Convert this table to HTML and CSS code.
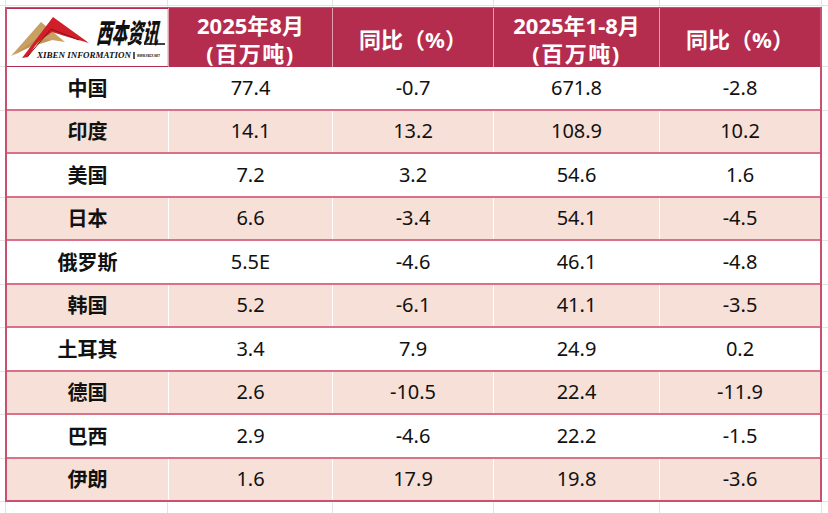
FILE: index.html
```html
<!DOCTYPE html>
<html lang="zh-CN">
<head>
<meta charset="utf-8">
<title>2025年8月 粗钢产量</title>
<link rel="stylesheet" href="styles.css">
</head>
<body>
<div class="sheet">
  <div class="table">
    <div class="row head">
      <div class="cell logo-cell">
        <div class="logo">
          <svg viewBox="0 0 160 57" width="160" height="57" aria-label="西本资讯 XIBEN INFORMATION">
            <polygon points="4,47 34,13 58,33 45,31 23,38" fill="#c9a064"/>
            <polygon points="7,46 30,29 45,31 23,38" fill="#b48a4e" opacity="0.55"/>
            <polygon points="15,49 46,8 82,34 61,28 45,23 30,34 21,48" fill="#d01f2a"/>
            <polyline points="21,47 44,20 72,31" fill="none" stroke="#8e1018" stroke-width="1"/>
            <text class="logo-cn" x="0" y="0" transform="translate(89 34) skewX(-12)" textLength="62" lengthAdjust="spacingAndGlyphs">西本资讯</text>
            <path d="M137 35 L158 35" stroke="#111" stroke-width="1.6"/>
            <text class="logo-en" x="30" y="49" textLength="94" lengthAdjust="spacingAndGlyphs">XIBEN INFORMATION</text>
            <path d="M127 43 L127 50" stroke="#111" stroke-width="1.4"/>
            <text class="logo-url" x="130" y="48" textLength="23" lengthAdjust="spacingAndGlyphs">WWW.XBZX.NET</text>
          </svg>
        </div>
      </div>
      <div class="cell hcell"><span>2025年8月</span><span class="unit">(百万吨)</span></div>
      <div class="cell hcell"><span>同比（%）</span></div>
      <div class="cell hcell"><span>2025年1-8月</span><span class="unit">(百万吨)</span></div>
      <div class="cell hcell"><span>同比（%）</span></div>
    </div>
    <div class="row"><div class="cell name">中国</div><div class="cell">77.4</div><div class="cell">-0.7</div><div class="cell">671.8</div><div class="cell">-2.8</div></div>
    <div class="row alt"><div class="cell name">印度</div><div class="cell">14.1</div><div class="cell">13.2</div><div class="cell">108.9</div><div class="cell">10.2</div></div>
    <div class="row"><div class="cell name">美国</div><div class="cell">7.2</div><div class="cell">3.2</div><div class="cell">54.6</div><div class="cell">1.6</div></div>
    <div class="row alt"><div class="cell name">日本</div><div class="cell">6.6</div><div class="cell">-3.4</div><div class="cell">54.1</div><div class="cell">-4.5</div></div>
    <div class="row"><div class="cell name">俄罗斯</div><div class="cell">5.5E</div><div class="cell">-4.6</div><div class="cell">46.1</div><div class="cell">-4.8</div></div>
    <div class="row alt"><div class="cell name">韩国</div><div class="cell">5.2</div><div class="cell">-6.1</div><div class="cell">41.1</div><div class="cell">-3.5</div></div>
    <div class="row"><div class="cell name">土耳其</div><div class="cell">3.4</div><div class="cell">7.9</div><div class="cell">24.9</div><div class="cell">0.2</div></div>
    <div class="row alt"><div class="cell name">德国</div><div class="cell">2.6</div><div class="cell">-10.5</div><div class="cell">22.4</div><div class="cell">-11.9</div></div>
    <div class="row"><div class="cell name">巴西</div><div class="cell">2.9</div><div class="cell">-4.6</div><div class="cell">22.2</div><div class="cell">-1.5</div></div>
    <div class="row alt last"><div class="cell name">伊朗</div><div class="cell">1.6</div><div class="cell">17.9</div><div class="cell">19.8</div><div class="cell">-3.6</div></div>
  </div>
</div>
</body>
</html>
```
FILE: styles.css
```css
html, body {
  margin: 0;
  width: 828px;
  height: 513px;
  overflow: hidden;
}

body {
  background-color: #fff;
  background-image:
    linear-gradient(#e3e3e3, #e3e3e3),
    linear-gradient(#e3e3e3, #e3e3e3),
    linear-gradient(#e3e3e3, #e3e3e3),
    linear-gradient(#e3e3e3, #e3e3e3),
    linear-gradient(#e3e3e3, #e3e3e3),
    linear-gradient(#e3e3e3, #e3e3e3),
    linear-gradient(#e3e3e3, #e3e3e3),
    repeating-linear-gradient(180deg, transparent 0 42.5px, #e3e3e3 42.5px 43.5px);
  background-repeat: no-repeat;
  background-size: 1px 100%, 1px 100%, 1px 100%, 1px 100%, 1px 100%, 1px 100%, 100% 1px, 100% 520px;
  background-position: 5px 0, 167px 0, 332px 0, 493px 0, 659px 0, 821px 0, 0 5px, 0 23.5px;
  font-family: "Noto Sans", "Noto Sans CJK SC", sans-serif;
  color: #111;
}

.sheet {
  padding: 7px 0 0 5px;
}

.table {
  width: 817px;
  box-sizing: border-box;
  border-left: 2px solid #c9506f;
  border-right: 2px solid #c9506f;
  border-top: 1px solid #c9506f;
}

.row {
  display: grid;
  grid-template-columns: 161px 164px 161px 166px 161px;
  height: 43.5px;
  box-sizing: border-box;
  border-bottom: 2px solid #d87189;
  background: #fff;
}

.row.alt {
  background: #f7e0d7;
}

.row.last {
  border-bottom-color: #cc4f6e;
}

.row.head {
  height: 59px;
  background: #b52d4e;
  border-bottom: 0;
}

.cell {
  display: flex;
  align-items: center;
  justify-content: center;
  font-size: 20px;
  line-height: 1;
  border-left: 1px solid #fff;
}

.cell:first-child {
  border-left: 0;
}

.cell.name {
  font-weight: 700;
  font-family: "Noto Sans CJK SC", sans-serif;
}

.hcell {
  flex-direction: column;
  color: #fff;
  font-weight: 700;
  font-size: 22px;
  line-height: 28px;
  border-left: 1px solid rgba(255, 255, 255, 0.55);
  padding-top: 2px;
  box-sizing: border-box;
  overflow: hidden;
}

.hcell .unit {
  letter-spacing: 1.5px;
}

.logo-cell {
  align-items: stretch;
  justify-content: stretch;
  padding: 1px 1px 1px 0;
}

.logo {
  flex: 1;
  background: #fff;
  border-right: 1px solid #d9d9d9;
  display: flex;
  align-items: center;
  justify-content: flex-start;
}

.logo svg {
  display: block;
  overflow: visible;
}

.logo-cn {
  font-family: "Noto Sans CJK SC", sans-serif;
  font-weight: 900;
  font-size: 27px;
  fill: #111;
}

.logo-en {
  font-family: "Liberation Serif", serif;
  font-style: italic;
  font-weight: 700;
  font-size: 8px;
  fill: #111;
}

.logo-url {
  font-family: "Liberation Sans", sans-serif;
  font-weight: 700;
  font-size: 4px;
  fill: #222;
}
```
